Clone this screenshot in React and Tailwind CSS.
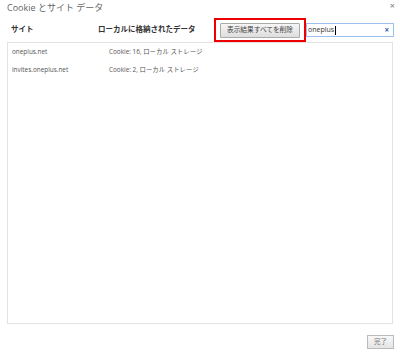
const ROWS = [
  { site: 'oneplus.net', data: 'Cookie: 16, ローカル ストレージ' },
  { site: 'invites.oneplus.net', data: 'Cookie: 2, ローカル ストレージ' },
]

const FONT = "font-['Open_Sans','Noto_Sans_CJK_JP',sans-serif]"

export default function App() {
  return (
    <div className={`relative flex h-[354px] w-[400px] flex-col bg-white ${FONT}`}>
      <span className="absolute right-[5px] top-[1px] text-[9px] leading-none text-[#777]">×</span>

      <div className="h-[16px] pl-[7px] pt-[3px] text-[9px] leading-[10px] text-[#666]">
        Cookie とサイト データ
      </div>

      <div className="flex h-[26px] items-center pr-[6px] pt-[2px]">
        <span className="w-[98px] pl-[11px] text-[7.5px] font-bold text-[#333]">サイト</span>
        <span className="flex-1 text-[7.5px] font-bold text-[#333]">ローカルに格納されたデータ</span>
        <div className="flex h-[24px] w-[92px] items-center justify-center border-[2px] border-[#ee0000]">
          <button
            type="button"
            className="flex h-[15px] w-[80px] items-center justify-center rounded-[1px] border border-[#aaa] bg-gradient-to-b from-[#f6f6f6] to-[#dedede] text-[6.7px] text-[#444]"
          >
            表示結果すべてを削除
          </button>
        </div>
        <div className="flex h-[14px] w-[88px] items-center border border-[#9ec0ee] pl-[1px] pr-[4px]">
          <span className="text-[7px] text-[#333]">oneplus</span>
          <span className="ml-[1px] h-[9px] w-px bg-black" />
          <span className="ml-auto text-[8px] font-bold leading-none text-[#2a5db0]">×</span>
        </div>
      </div>

      <div className="mx-[7px] flex h-[282px] flex-col border border-[#e3e3e3]">
        {ROWS.map((row) => (
          <div key={row.site} className="flex h-[18px] items-center text-[6.4px] text-[#555]">
            <span className="w-[101px] pl-[4px]">{row.site}</span>
            <span>{row.data}</span>
          </div>
        ))}
      </div>

      <div className="flex justify-end pr-[6px] pt-[11px]">
        <button
          type="button"
          className="flex h-[14px] w-[27px] items-center justify-center border border-[#bbb] bg-gradient-to-b from-[#f8f8f8] to-[#e4e4e4] text-[6.5px] text-[#777]"
        >
          完了
        </button>
      </div>
    </div>
  )
}
